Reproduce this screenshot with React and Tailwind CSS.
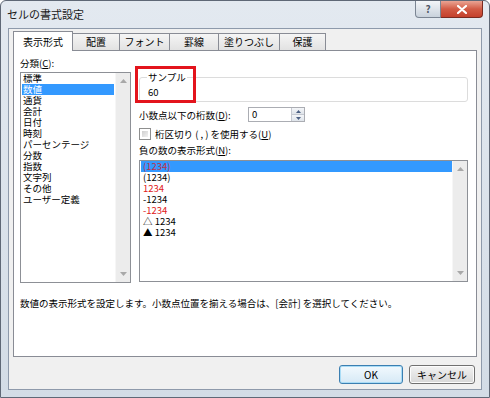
import React from 'react';

const UpArrow = () => (
  <svg width="7" height="4" viewBox="0 0 7 4"><path d="M0 4L3.5 0L7 4Z" fill="#a8a8a8" /></svg>
);
const DownArrow = () => (
  <svg width="7" height="4" viewBox="0 0 7 4"><path d="M0 0L3.5 4L7 0Z" fill="#a8a8a8" /></svg>
);

const ScrollBar = () => (
  <div className="w-[15px] h-full bg-[#ececec] border-l border-[#f6f6f6] flex flex-col items-center justify-between py-[6px]">
    <UpArrow />
    <DownArrow />
  </div>
);

const Mn = ({ c }) => <span className="underline">{c}</span>;

const categories = ['標準', '数値', '通貨', '会計', '日付', '時刻', 'パーセンテージ', '分数', '指数', '文字列', 'その他', 'ユーザー定義'];

const negatives = [
  { t: '(1234)', c: 'text-[#c0304a]', sel: true },
  { t: '(1234)', c: 'text-black' },
  { t: '1234', c: 'text-[#e02020]' },
  { t: '-1234', c: 'text-black' },
  { t: '-1234', c: 'text-[#e02020]' },
  { t: '△ 1234', c: 'text-black' },
  { t: '▲ 1234', c: 'text-black' },
];

const tabs = [
  { t: '配置', w: 'w-[47px]' },
  { t: 'フォント', w: 'w-[50px]' },
  { t: '罫線', w: 'w-[49px]' },
  { t: '塗りつぶし', w: 'w-[61px]' },
  { t: '保護', w: 'w-[46px]' },
];

export default function App() {
  return (
    <div className="w-[490px] h-[398px] bg-gradient-to-b from-[#e3e9f0] to-[#d3dce6] border border-[#5f6876] rounded-t-[6px] flex flex-col overflow-hidden font-['Noto_Sans_CJK_JP','Noto_Sans',sans-serif] text-[9.5px] leading-[12px] text-black">
      {/* title bar */}
      <div className="h-[27px] flex items-start shrink-0">
        <span className="pl-[6px] pt-[6px] text-[11px] leading-[14px] text-[#1a1a1a]">セルの書式設定</span>
        <div className="ml-auto mr-[6px] flex">
          <div className="w-[26px] h-[17px] bg-gradient-to-b from-[#f3f5f8] to-[#c9d2dc] border border-[#7b8593] border-t-0 rounded-bl-[4px] flex items-center justify-center text-[10px] leading-[10px] font-bold text-[#4f5866]">?</div>
          <div className="w-[42px] h-[17px] bg-gradient-to-b from-[#e9a494] via-[#d25b45] to-[#c4402c] border border-[#7a2a20] border-t-0 border-l-0 rounded-br-[4px] flex items-center justify-center">
            <svg width="10" height="9" viewBox="0 0 10 9">
              <path d="M1 1L9 8M9 1L1 8" stroke="#fff" strokeWidth="2.2" strokeLinecap="round" />
            </svg>
          </div>
        </div>
      </div>

      {/* client area */}
      <div className="flex-1 mx-[7px] mb-[7px] bg-[#f0f0f0] border border-[#8e9aab] flex flex-col">
        {/* tabs */}
        <div className="flex items-end h-[21px] pl-[4px] pt-[2px]">
          <div className="relative z-10 -mb-px w-[60px] h-[20px] bg-white border border-b-0 border-[#898c95] flex items-center justify-center text-[10px]">表示形式</div>
          {tabs.map((tab) => (
            <div key={tab.t} className={`${tab.w} h-[17px] bg-gradient-to-b from-[#f5f5f5] to-[#e2e2e2] border-t border-r border-[#898c95] flex items-center justify-center text-[10px]`}>
              {tab.t}
            </div>
          ))}
        </div>

        {/* panel */}
        <div className="mx-[4px] h-[307px] bg-white border border-[#898c95] flex flex-col pl-[6px] pt-[6px]">
          <div className="flex">
            {/* left column */}
            <div className="w-[111px] flex flex-col">
              <div className="h-[12px]">分類(<Mn c="C" />):</div>
              <div className="mt-[3px] h-[211px] border border-[#8d9096] bg-white flex">
                <div className="flex-1 pl-px pr-[1px]">
                  {categories.map((c, i) => (
                    <div key={c} className={`h-[11px] leading-[11px] pl-px ${i === 1 ? 'bg-[#3399ff] text-white' : ''}`}>{c}</div>
                  ))}
                </div>
                <ScrollBar />
              </div>
            </div>

            {/* right column */}
            <div className="ml-[8px] w-[329px] flex flex-col relative">
              <fieldset className="mt-[14px] border border-[#dcdcdc] rounded-[3px] px-[7px] pb-[3px]">
                <legend className="px-[1px] leading-[12px]">サンプル</legend>
                <div className="pt-[3px] leading-[12px] pl-px">60</div>
              </fieldset>
              <div className="absolute left-[-4px] top-[9px] w-[61px] h-[37px] border-[3px] border-[#e3141c]" />

              <div className="mt-[5px] flex items-center h-[15px]">
                <div className="w-[109px]">小数点以下の桁数(<Mn c="D" />):</div>
                <div className="w-[57px] h-[15px] border border-[#abadb3] bg-white flex">
                  <div className="flex-1 pl-[3px] leading-[13px]">0</div>
                  <div className="w-[13px] flex flex-col border-l border-[#c5c9d1]">
                    <div className="flex-1 bg-gradient-to-b from-[#f4f6f9] to-[#dfe4ea] flex items-center justify-center border-b border-[#c5c9d1]">
                      <svg width="5" height="3" viewBox="0 0 5 3"><path d="M0 3L2.5 0L5 3Z" fill="#4c6084" /></svg>
                    </div>
                    <div className="flex-1 bg-gradient-to-b from-[#f4f6f9] to-[#dfe4ea] flex items-center justify-center">
                      <svg width="5" height="3" viewBox="0 0 5 3"><path d="M0 0L2.5 3L5 0Z" fill="#4c6084" /></svg>
                    </div>
                  </div>
                </div>
              </div>

              <div className="mt-[6px] flex items-center h-[12px]">
                <div className="w-[12px] h-[12px] border border-[#8e8f8f] bg-white p-[2px]">
                  <div className="w-full h-full bg-gradient-to-br from-[#cfcfcf] to-[#f2f2f2]" />
                </div>
                <span className="ml-[4px]">桁区切り ( , ) を使用する(<Mn c="U" />)</span>
              </div>

              <div className="mt-[4px] h-[12px]">負の数の表示形式(<Mn c="N" />):</div>

              <div className="mt-[4px] h-[122px] border border-[#8d9096] bg-white flex">
                <div className="flex-1 pl-px">
                  {negatives.map((n, i) => (
                    <div key={i} className={`h-[11px] leading-[11px] pl-[2px] ${n.c} ${n.sel ? 'bg-[#3399ff]' : ''}`}>{n.t}</div>
                  ))}
                </div>
                <ScrollBar />
              </div>
            </div>
          </div>

          <div className="mt-[14px] h-[12px]">数値の表示形式を設定します。小数点位置を揃える場合は、[会計] を選択してください。</div>
        </div>

        {/* buttons */}
        <div className="flex justify-end gap-[6px] mr-[6px] mt-[8px]">
          <div className="w-[64px] h-[19px] rounded-[3px] border border-[#3c7fb1] bg-gradient-to-b from-[#f2f9fd] to-[#d6e9f6] shadow-[inset_0_0_0_1px_#a9dcf6] flex items-center justify-center text-[10px]">OK</div>
          <div className="w-[66px] h-[19px] rounded-[3px] border border-[#707070] bg-gradient-to-b from-[#f2f2f2] to-[#d8d8d8] shadow-[inset_0_0_0_1px_#fcfcfc] flex items-center justify-center text-[10px]">キャンセル</div>
        </div>
      </div>
    </div>
  );
}
